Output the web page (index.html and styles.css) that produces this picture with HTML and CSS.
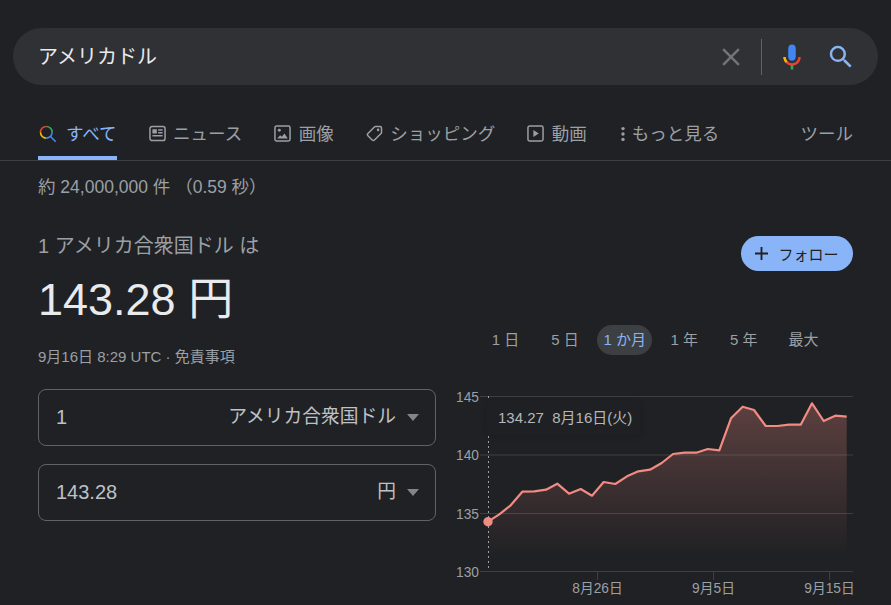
FILE: index.html
```html
<!DOCTYPE html>
<html lang="ja">
<head>
<meta charset="utf-8">
<title>アメリカドル</title>
<link rel="stylesheet" href="styles.css">
</head>
<body>
<header class="search">
  <span class="query">アメリカドル</span>
  <svg class="ico-30 clear" viewBox="0 0 24 24"><path d="M19 6.41L17.59 5 12 10.59 6.41 5 5 6.41 10.59 12 5 17.59 6.41 19 12 13.41 17.59 19 19 17.59 13.41 12z"/></svg>
  <span class="divider"></span>
  <svg class="ico-30" viewBox="0 0 24 24"><path fill="#4285f4" d="m12 15c1.66 0 3-1.31 3-2.97v-7.02c0-1.66-1.34-3.01-3-3.01s-3 1.34-3 3.01v7.02c0 1.66 1.34 2.97 3 2.97z"/><path fill="#34a853" d="m11 18.08h2v3.92h-2z"/><path fill="#fbbc05" d="m7.05 16.87c-1.27-1.33-2.05-2.83-2.05-4.87h2c0 1.45 0.56 2.42 1.47 3.38v0.32l-1.15 1.18z"/><path fill="#ea4335" d="m12 16.93a4.97 5.25 0 0 1 -3.54 -1.55l-1.41 1.49c1.26 1.34 3.02 2.13 4.95 2.13 3.87 0 6.99-2.92 6.99-6.99h-2c0 2.92-2.24 4.92-4.99 4.92z"/></svg>
  <svg class="ico-30 go" viewBox="0 0 24 24"><path d="M15.5 14h-.79l-.28-.27A6.471 6.471 0 0 0 16 9.5 6.5 6.5 0 1 0 9.5 16c1.61 0 3.09-.59 4.23-1.57l.27.28v.79l5 4.99L20.49 19l-4.99-5zm-6 0C7.01 14 5 11.99 5 9.5S7.01 5 9.5 5 14 7.01 14 9.5 11.99 14 9.5 14z"/></svg>
</header>

<nav class="tabs">
  <a class="tab active"><svg class="ico-all" viewBox="0 0 24 24"><path fill="#34A853" d="M10 2v2a6 6 0 0 1 6 6h2a8 8 0 0 0-8-8"/><path fill="#EA4335" d="M10 4V2a8 8 0 0 0-8 8h2c0-3.4 2.6-6 6-6"/><path fill="#FBBC04" d="M4 10H2a8 8 0 0 0 8 8v-2c-3.4 0-6-2.6-6-6"/><path fill="#4285F4" d="M22 20.59l-5.69-5.69A7.96 7.96 0 0 0 18 10h-2a6 6 0 0 1-6 6v2c1.85 0 3.55-.63 4.9-1.69l5.69 5.69L22 20.59"/></svg>すべて</a>
  <a class="tab"><svg class="ico" viewBox="0 0 16 16"><rect class="ol" x="0.9" y="1.4" width="14.2" height="13.2" rx="2"/><rect class="fl" x="3.2" y="4" width="4.2" height="4"/><rect class="fl" x="8.6" y="4" width="4.2" height="1.4"/><rect class="fl" x="8.6" y="6.6" width="4.2" height="1.4"/><rect class="fl" x="3.2" y="9.4" width="9.6" height="1.4"/></svg>ニュース</a>
  <a class="tab"><svg class="ico" viewBox="0 0 16 16"><rect class="ol" x="0.9" y="0.9" width="14.2" height="14.2" rx="1.6"/><circle class="fl" cx="5" cy="5" r="1.4"/><path class="fl" d="M3 12.6l2.8-3 1.6 1.4 2.4-3 3.2 4.6z"/></svg>画像</a>
  <a class="tab"><svg class="ico" viewBox="0 0 16 16"><path class="ol" d="M9 1.4h4.1a1.5 1.5 0 0 1 1.5 1.5V7a1.5 1.5 0 0 1-.45 1.05l-6.2 6.1a1.5 1.5 0 0 1-2.1 0L1.8 10.1a1.5 1.5 0 0 1 0-2.1l6.1-6.15A1.5 1.5 0 0 1 9 1.4z"/><circle class="fl" cx="11.4" cy="4.6" r="1.2"/></svg>ショッピング</a>
  <a class="tab"><svg class="ico" viewBox="0 0 16 16"><rect class="ol" x="0.9" y="0.9" width="14.2" height="14.2" rx="1.6"/><path class="fl" d="M6 4.6l5 3.4-5 3.4z"/></svg>動画</a>
  <a class="tab more"><svg class="ico-dots" viewBox="0 0 4 16"><circle class="fl" cx="2" cy="2.6" r="1.7"/><circle class="fl" cx="2" cy="8" r="1.7"/><circle class="fl" cx="2" cy="13.4" r="1.7"/></svg>もっと見る</a>
  <a class="tab tools">ツール</a>
</nav>

<p class="stats">約 24,000,000 件 （0.59 秒）</p>

<main class="result">
  <section class="convert">
    <p class="from">1 アメリカ合衆国ドル は</p>
    <p class="price">143.28 円</p>
    <p class="when">9月16日 8:29 UTC · 免責事項</p>
    <div class="field">
      <span class="amount">1</span>
      <span class="unit">アメリカ合衆国ドル</span>
      <span class="caret"></span>
    </div>
    <div class="field">
      <span class="amount">143.28</span>
      <span class="unit">円</span>
      <span class="caret"></span>
    </div>
  </section>

  <section class="market">
    <button class="follow"><svg class="plus" viewBox="0 0 14 14"><path d="M6 0h2v6h6v2H8v6H6V8H0V6h6z"/></svg>フォロー</button>
    <div class="ranges">
      <span class="range">1 日</span>
      <span class="range">5 日</span>
      <span class="range on">1 か月</span>
      <span class="range">1 年</span>
      <span class="range">5 年</span>
      <span class="range">最大</span>
    </div>
    <div class="chart">
      <svg class="plot" viewBox="0 0 403 225">
        <defs>
          <linearGradient id="fade" gradientUnits="userSpaceOnUse" x1="0" y1="20" x2="0" y2="175">
            <stop offset="0" stop-color="#f28b82" stop-opacity="0.3"/>
            <stop offset="1" stop-color="#f28b82" stop-opacity="0"/>
          </linearGradient>
        </defs>
        <path class="grid" d="M30 16.5H403M30 75H403M30 133.5H403M30 191.5H403"/>
        <path class="tick" d="M147.5 192V200M263.5 192V200M379.5 192V200"/>
        <polygon class="area" points="38,141.7 49.3,134.3 60.7,125.3 72.3,111.7 84.3,111.3 96,109.7 107.3,103.7 119,113.7 130.7,109 142,115.7 153.7,102 165.3,104 177,96.3 188.3,91.3 200,89.7 211.7,83 223,74 234.7,72.7 246.3,72.7 257.7,69 269.3,70.3 281,38.3 292.7,26.7 304,30 315.7,46 327.3,46 339,44.7 350.7,44.7 362,23.3 373.7,41 385.3,35.7 396.7,36.7 396.7,190 38,190"/>
        <path class="guide" d="M38.5 16V190"/>
        <polyline class="line" points="38,141.7 49.3,134.3 60.7,125.3 72.3,111.7 84.3,111.3 96,109.7 107.3,103.7 119,113.7 130.7,109 142,115.7 153.7,102 165.3,104 177,96.3 188.3,91.3 200,89.7 211.7,83 223,74 234.7,72.7 246.3,72.7 257.7,69 269.3,70.3 281,38.3 292.7,26.7 304,30 315.7,46 327.3,46 339,44.7 350.7,44.7 362,23.3 373.7,41 385.3,35.7 396.7,36.7"/>
        <circle class="dot" cx="38" cy="141.7" r="4.7"/>
        <text class="axis" x="6" y="21.5">145</text>
        <text class="axis" x="6" y="80">140</text>
        <text class="axis" x="6" y="138.5">135</text>
        <text class="axis" x="6" y="196.5">130</text>
        <text class="axis mid" x="147.5" y="213">8月26日</text>
        <text class="axis mid" x="263.5" y="213">9月5日</text>
        <text class="axis mid" x="379.5" y="213">9月15日</text>
      </svg>
      <div class="tip">134.27&nbsp; 8月16日(火)</div>
    </div>
  </section>
</main>
</body>
</html>
```

FILE: styles.css
```css
* { box-sizing: border-box; }
html, body { margin: 0; height: 100%; }
body {
  width: 891px;
  height: 605px;
  overflow: hidden;
  background: #202124;
  color: #9aa0a6;
  font-family: "Liberation Sans", "Noto Sans CJK JP", sans-serif;
  padding-top: 28px;
}
p { margin: 0; }

.search {
  display: flex;
  align-items: center;
  height: 57px;
  margin: 0 13px;
  padding: 0 22px 0 25px;
  border-radius: 29px;
  background: #303134;
}
.query { flex: 1; font-size: 20px; color: #e8eaed; padding-bottom: 3px; }
.ico-30 { width: 30px; height: 30px; flex: none; }
.clear { fill: #70757a; }
.go { fill: #8ab4f8; margin-left: 19px; }
.divider { width: 1px; height: 36px; background: #5f6368; margin: 0 15px; }

.tabs {
  display: flex;
  gap: 32px;
  height: 54px;
  margin-top: 22px;
  padding: 0 38px;
  border-bottom: 1px solid #3c4043;
  font-size: 17.5px;
}
.tab {
  display: flex;
  align-items: center;
  height: 53px;
  padding-top: 2px;
  border-bottom: 4px solid transparent;
  color: #9aa0a6;
  white-space: nowrap;
}
.tab.active { color: #8ab4f8; border-bottom-color: #8ab4f8; }
.ico-all { width: 20px; height: 20px; margin: 2px 8px 0 0; flex: none; }
.ico { width: 17px; height: 17px; margin: 2px 7.5px 0 0; flex: none; }
.ico-dots { width: 4px; height: 16px; margin: 2px 7px 0 0; flex: none; }
.more { margin-left: 2px; }
.tools { margin-left: auto; }
.ol { fill: none; stroke: #9aa0a6; stroke-width: 1.4; }
.fl { fill: #9aa0a6; }

.stats { margin: 14px 38px 0; font-size: 17.5px; line-height: 24px; color: #9aa0a6; }

.result {
  display: grid;
  grid-template-columns: 398px 403px;
  column-gap: 14px;
  padding: 0 38px;
  margin-top: 32px;
}
.from { font-size: 20px; line-height: 28px; margin-top: 1px; }
.price { font-size: 45px; line-height: 56px; color: #e8eaed; margin-top: 12px; }
.when { font-size: 15px; line-height: 20px; margin-top: 19px; }

.field {
  display: flex;
  align-items: center;
  height: 57px;
  margin-top: 18px;
  padding: 0 16px 0 17px;
  border: 1px solid #5f6368;
  border-radius: 8px;
  color: #bdc1c6;
}
.when + .field { margin-top: 22px; }
.amount { flex: 1; font-size: 20px; }
.unit { font-size: 18.75px; padding-bottom: 6px; }
.caret {
  width: 0;
  height: 0;
  margin-left: 11px;
  border-style: solid;
  border-width: 7px 6px 0;
  border-color: #80868b transparent transparent;
}

.market { display: flex; flex-direction: column; align-items: flex-end; }
.follow {
  display: flex;
  align-items: center;
  justify-content: center;
  width: 112px;
  height: 35px;
  margin-top: 5px;
  padding: 0;
  border: 0;
  border-radius: 18px;
  background: #8ab4f8;
  color: #202124;
  font: inherit;
  font-size: 15px;
}
.plus { width: 13px; height: 13px; margin-right: 10px; fill: #202124; }
.ranges {
  display: flex;
  gap: 4.6px;
  align-self: flex-start;
  margin: 54px 0 0 28px;
}
.range {
  width: 55px;
  height: 30px;
  border-radius: 15px;
  font-size: 15px;
  line-height: 30px;
  text-align: center;
  white-space: nowrap;
}
.range.on { background: #3c4043; color: #8ab4f8; }

.chart { position: relative; align-self: flex-start; width: 403px; height: 225px; margin-top: 25px; }
.plot { display: block; width: 403px; height: 225px; overflow: visible; }
.grid { fill: none; stroke: #3c4043; stroke-width: 1; }
.tick { fill: none; stroke: #3c4043; stroke-width: 1; }
.area { fill: url(#fade); }
.guide { fill: none; stroke: #9aa0a6; stroke-width: 1; stroke-dasharray: 2 3; }
.line { fill: none; stroke: #f28b82; stroke-width: 2.2; stroke-linejoin: round; }
.dot { fill: #f28b82; }
.axis { fill: #9aa0a6; font-size: 13.75px; }
.mid { text-anchor: middle; }
.tip {
  position: absolute;
  left: 37px;
  top: 20px;
  width: 153px;
  height: 35px;
  padding-left: 11px;
  background: #1f2023;
  box-shadow: 0 1px 6px rgba(0, 0, 0, .2);
  color: #b4b8bd;
  font-size: 15px;
  line-height: 35px;
  white-space: nowrap;
}
```
